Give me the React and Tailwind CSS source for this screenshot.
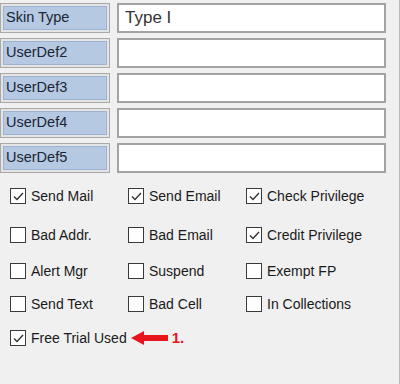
const fields = [
  { label: "Skin Type", value: "Type I" },
  { label: "UserDef2", value: "" },
  { label: "UserDef3", value: "" },
  { label: "UserDef4", value: "" },
  { label: "UserDef5", value: "" },
];

const rows = [
  { h: "h-[38px]", items: [["Send Mail", true], ["Send Email", true], ["Check Privilege", true]] },
  { h: "h-[40px]", items: [["Bad Addr.", false], ["Bad Email", false], ["Credit Privilege", true]] },
  { h: "h-[32px]", items: [["Alert Mgr", false], ["Suspend", false], ["Exempt FP", false]] },
  { h: "h-[34px]", items: [["Send Text", false], ["Bad Cell", false], ["In Collections", false]] },
];

function Box({ checked }) {
  return (
    <div className="w-[16px] h-[16px] border-[1.5px] border-[#3a3a3a] bg-white flex items-center justify-center shrink-0">
      {checked && (
        <svg width="13" height="13" viewBox="0 0 13 13">
          <path d="M2 6.5 L5 9.5 L11 3" fill="none" stroke="#333" strokeWidth="1.4" />
        </svg>
      )}
    </div>
  );
}

function Check({ label, checked }) {
  return (
    <div className="flex items-center gap-[5px]">
      <Box checked={checked} />
      <span className="text-[14px] text-[#1a1a1a] leading-none">{label}</span>
    </div>
  );
}

export default function App() {
  return (
    <div
      className="w-[400px] h-[384px] bg-[#f0f0f0] border-r border-[#b8b8b8] overflow-hidden"
      style={{ fontFamily: '"Liberation Sans", Arial, sans-serif' }}
    >
      <div className="flex flex-col gap-[5px] pt-[3px]">
        {fields.map((f) => (
          <div key={f.label} className="flex items-center gap-[7px] h-[30px]">
            <div className="w-[110px] h-[30px] border border-[#a9a9a9] bg-[#e4e4e4] p-[2px]">
              <div className="h-full bg-[#b5c9e2] border border-[#9db3cf] flex items-center pl-[2px]">
                <span className="text-[14.5px] text-[#1b2533]">{f.label}</span>
              </div>
            </div>
            <div className="w-[269px] h-[30px] border-2 border-[#a3a3a3] bg-white flex items-center pl-[6px]">
              <span className="text-[17px] text-[#333]">{f.value}</span>
            </div>
          </div>
        ))}
      </div>

      <div className="pt-[4px] pl-[10px]">
        {rows.map((r, i) => (
          <div key={i} className={`${r.h} grid grid-cols-[118px_118px_1fr] items-center`}>
            {r.items.map(([l, c]) => (
              <Check key={l} label={l} checked={c} />
            ))}
          </div>
        ))}
        <div className="h-[34px] flex items-center">
          <Check label="Free Trial Used" checked />
          <svg width="38" height="16" viewBox="0 0 38 16" className="ml-[4px]">
            <path d="M0 8 L13 1 L13 5 L37 5 L37 11 L13 11 L13 15 Z" fill="#e8141c" />
          </svg>
          <span className="ml-[3px] text-[15px] font-bold text-[#e8141c]">1.</span>
        </div>
      </div>
    </div>
  );
}
